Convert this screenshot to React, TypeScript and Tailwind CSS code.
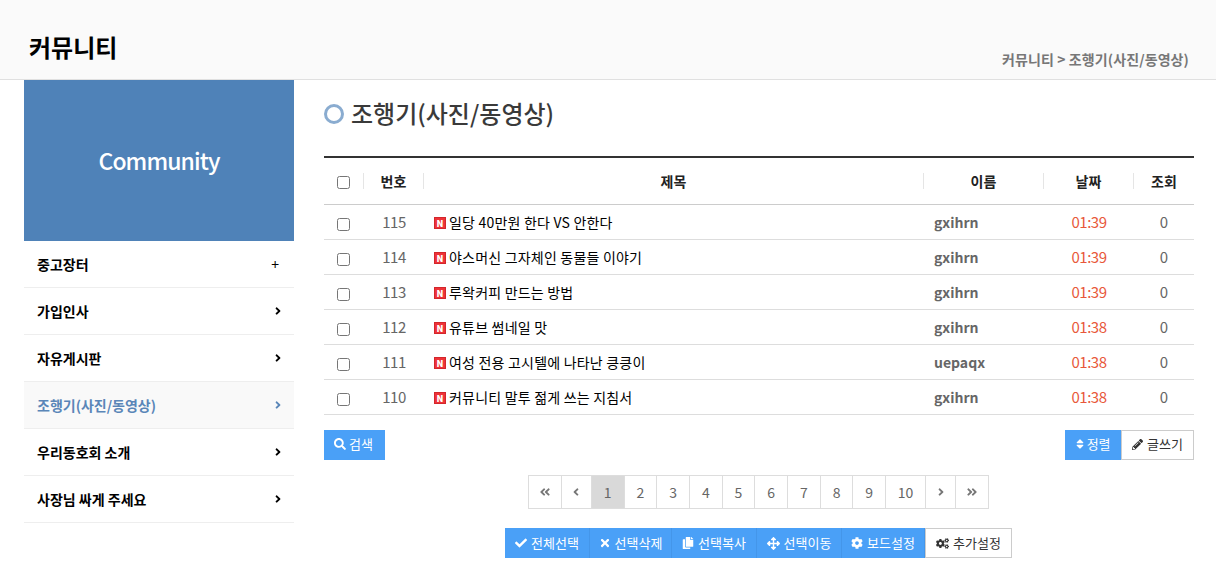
import React from 'react';
import {
    FaAngleDoubleLeft,
    FaAngleDoubleRight,
    FaAngleLeft,
    FaAngleRight,
    FaArrowsAlt,
    FaCheck,
    FaCog,
    FaCogs,
    FaCopy,
    FaPencilAlt,
    FaSearch,
    FaSort,
    FaTimes,
} from 'react-icons/fa';

const menu = [
    { label: '중고장터', plus: true },
    { label: '가입인사' },
    { label: '자유게시판' },
    { label: '조행기(사진/동영상)', active: true },
    { label: '우리동호회 소개' },
    { label: '사장님 싸게 주세요' },
];

const posts = [
    { no: 115, title: '일당 40만원 한다 VS 안한다', name: 'gxihrn', date: '01:39' },
    { no: 114, title: '야스머신 그자체인 동물들 이야기', name: 'gxihrn', date: '01:39' },
    { no: 113, title: '루왁커피 만드는 방법', name: 'gxihrn', date: '01:39' },
    { no: 112, title: '유튜브 썸네일 맛', name: 'gxihrn', date: '01:38' },
    { no: 111, title: '여성 전용 고시텔에 나타난 킁킁이', name: 'uepaqx', date: '01:38' },
    { no: 110, title: '커뮤니티 말투 젊게 쓰는 지침서', name: 'gxihrn', date: '01:38' },
];

const adminButtons = [
    { label: '전체선택', width: 'w-[85px]', icon: <FaCheck size={12} /> },
    { label: '선택삭제', width: 'w-[82px]', icon: <FaTimes size={12} /> },
    { label: '선택복사', width: 'w-[85px]', icon: <FaCopy size={12} /> },
    { label: '선택이동', width: 'w-[85px]', icon: <FaArrowsAlt size={13} /> },
    { label: '보드설정', width: 'w-[83px]', icon: <FaCog size={12} /> },
];

const PageLink = ({ children, width, active }: { children: React.ReactNode; width: string; active?: boolean }) => (
    <a className={`flex h-[34px] ${width} -ml-px items-center justify-center border border-[#ddd] text-[14px] text-[#666] ${active ? 'bg-[#d9d9d9]' : 'bg-white'}`}>
        {children}
    </a>
);

export default function App() {
    return (
        <div className="min-h-[570px] bg-white font-['Noto_Sans_CJK_KR','Noto_Sans',sans-serif] text-[14px] text-black">
            {/* Page head */}
            <header className="flex h-20 items-end justify-between border-b border-[#e0e0e0] bg-[#fafafa] pl-[29px] pr-[27px]">
                <h1 className="mb-[14px] text-[24px] leading-[36px] font-bold">커뮤니티</h1>
                <p className="mb-[9px] text-[14px] leading-[21px] font-bold tracking-[0.1px] text-[#777]">커뮤니티 &gt; 조행기(사진/동영상)</p>
            </header>

            <div className="flex pl-6 pr-[22px]">
                {/* Sidebar */}
                <aside className="w-[270px] shrink-0">
                    <div className="flex h-[161px] items-center justify-center bg-[#4f82b8] text-[23px] font-medium tracking-[-0.9px] text-white">
                        Community
                    </div>
                    <ul>
                        {menu.map((item) => (
                            <li
                                key={item.label}
                                className={`flex h-[47px] items-center justify-between border-b border-[#eee] pl-[13px] font-bold ${item.plus ? 'pr-[15px]' : 'pr-[10px]'} ${item.active ? 'bg-[#f9f9f9] text-[#5a86b8]' : ''}`}
                            >
                                <span>{item.label}</span>
                                {item.plus ? (
                                    <span className="font-normal">+</span>
                                ) : (
                                    <FaAngleRight size={12} />
                                )}
                            </li>
                        ))}
                    </ul>
                </aside>

                {/* Board */}
                <main className="ml-[30px] w-[870px]">
                    <div className="flex h-[76px] items-start pt-[15px]">
                        <span className="mt-[9px] mr-[7px] size-[20px] rounded-full border-[3px] border-[#8aacd0]" />
                        <h2 className="text-[24px] leading-[36px] font-medium text-[#3a3a3a]">조행기(사진/동영상)</h2>
                    </div>

                    <div className="grid h-[49px] grid-cols-[39px_60px_500px_120px_90px_61px] items-center border-t-2 border-b border-t-[#333] border-b-[#ccc] font-bold text-[#222]">
                        <div className="flex h-4 items-center pl-[13px]">
                            <input type="checkbox" className="mt-[2px]" />
                        </div>
                        {['번호', '제목', '이름', '날짜', '조회'].map((h) => (
                            <div key={h} className="flex h-4 items-center justify-center border-l border-[#e5e5e5]">
                                {h}
                            </div>
                        ))}
                    </div>

                    {posts.map((p) => (
                        <div key={p.no} className="grid h-[35px] grid-cols-[40px_60px_500px_120px_90px_60px] items-center border-b border-[#ddd]">
                            <div className="flex items-center pl-[13px]">
                                <input type="checkbox" className="mt-[5px]" />
                            </div>
                            <div className="text-center text-[15px] tracking-[-0.5px] text-[#666]">{p.no}</div>
                            <div className="flex items-center pl-[10px]">
                                <span className="mt-[2px] mr-[3px] flex size-3 items-center justify-center border border-[#d3262b] bg-[#ee3338] text-[9px] leading-none font-black text-white">
                                    N
                                </span>
                                <span className="tracking-[0.2px]">{p.title}</span>
                            </div>
                            <div className="pl-[10px] font-bold text-[#666]">{p.name}</div>
                            <div className="text-center text-[15px] tracking-[-0.5px] text-[#e8583a]">{p.date}</div>
                            <div className="text-center text-[15px] text-[#666]">0</div>
                        </div>
                    ))}

                    <div className="mt-[15px] flex justify-between">
                        <button className="flex h-[30px] w-[61px] items-center justify-center gap-[3px] bg-[#4aa0f7] pb-[2px] pr-[2px] text-[13px] text-white">
                            <FaSearch size={12} />
                            검색
                        </button>
                        <div className="flex">
                            <button className="flex h-[30px] w-[56px] items-center justify-center gap-[3px] bg-[#4aa0f7] pb-[2px] text-[13px] text-white">
                                <FaSort size={12} className="w-[8px]" />
                                정렬
                            </button>
                            <button className="flex h-[30px] items-center gap-[4px] border border-[#ccc] bg-white pb-[2px] px-[10px] text-[13px] text-[#333]">
                                <FaPencilAlt size={11} />
                                글쓰기
                            </button>
                        </div>
                    </div>

                    <nav className="mt-[15px] flex justify-center">
                        <PageLink width="w-[34px]"><FaAngleDoubleLeft size={12} className="text-[#777]" /></PageLink>
                        <PageLink width="w-[31px]"><FaAngleLeft size={12} className="text-[#777]" /></PageLink>
                        {[1, 2, 3, 4, 5, 6, 7, 8, 9, 10].map((n) => (
                            <PageLink key={n} width={n === 10 ? 'w-[41px]' : 'w-[33.7px]'} active={n === 1}>
                                {n}
                            </PageLink>
                        ))}
                        <PageLink width="w-[31px]"><FaAngleRight size={12} className="text-[#777]" /></PageLink>
                        <PageLink width="w-[34px]"><FaAngleDoubleRight size={12} className="text-[#777]" /></PageLink>
                    </nav>

                    <div className="mt-[19px] mr-[1px] flex justify-center">
                        {adminButtons.map((b) => (
                            <button
                                key={b.label}
                                className={`flex h-[30px] ${b.width} items-center justify-center gap-[4px] border-r border-[#4496ea] bg-[#4aa0f7] text-[13px] text-white last:border-r-0`}
                            >
                                {b.icon}
                                {b.label}
                            </button>
                        ))}
                        <button className="flex h-[30px] w-[87px] items-center justify-center gap-[4px] border border-[#ccc] bg-white text-[13px] text-[#333]">
                            <FaCogs size={13} />
                            추가설정
                        </button>
                    </div>
                </main>
            </div>
        </div>
    );
}
